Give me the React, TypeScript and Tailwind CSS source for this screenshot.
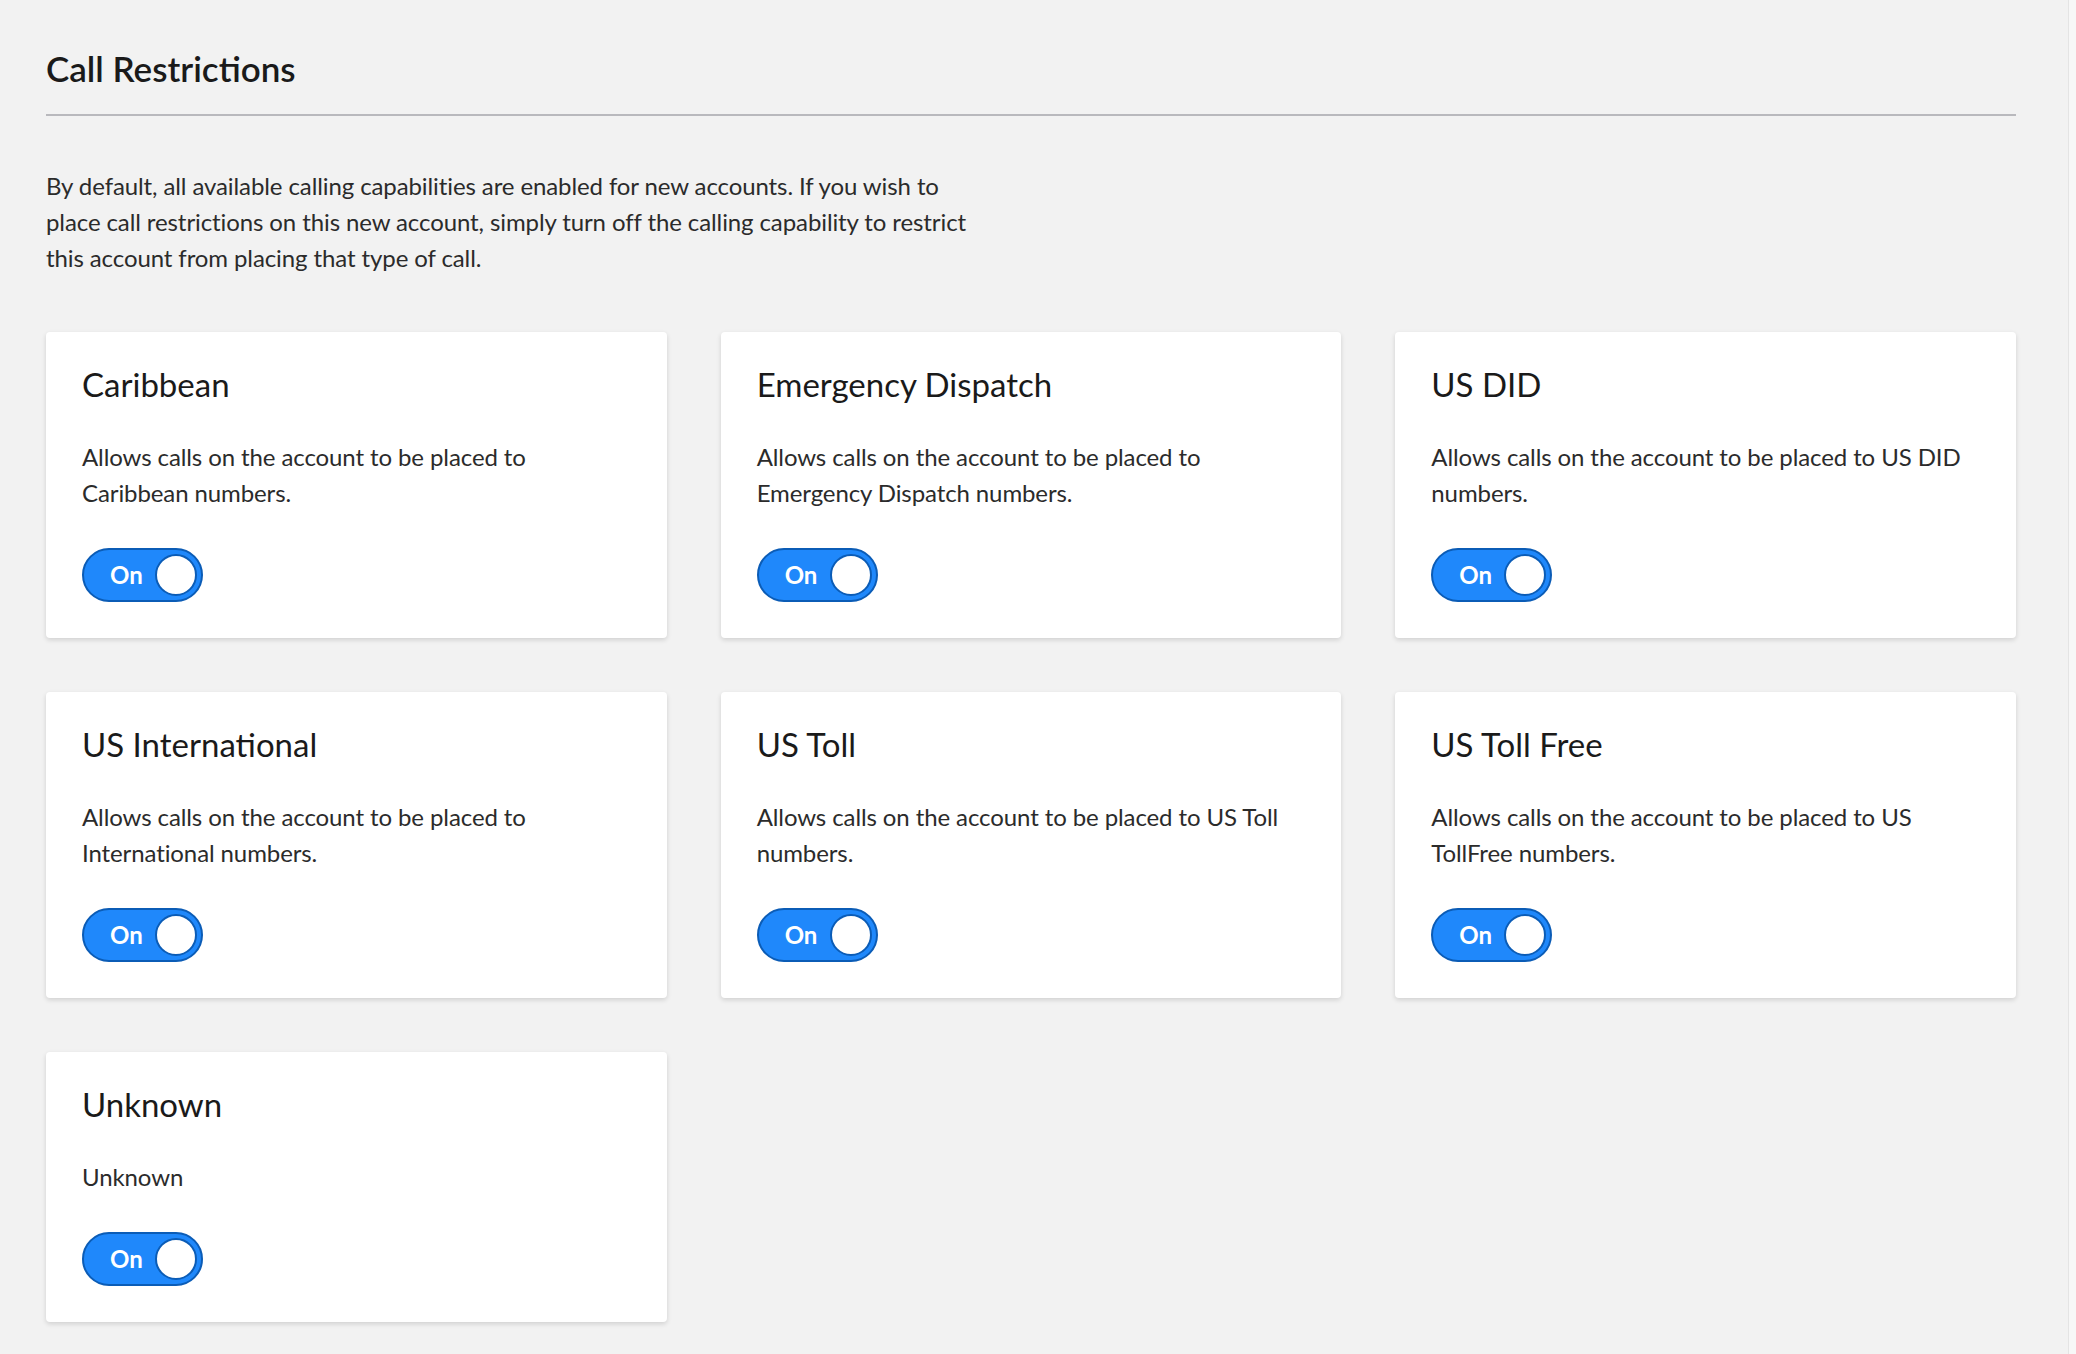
import React from "react";

const cards = [
  { title: "Caribbean", desc: "Allows calls on the account to be placed to Caribbean numbers." },
  { title: "Emergency Dispatch", desc: "Allows calls on the account to be placed to Emergency Dispatch numbers." },
  { title: "US DID", desc: "Allows calls on the account to be placed to US DID numbers." },
  { title: "US International", desc: "Allows calls on the account to be placed to International numbers." },
  { title: "US Toll", desc: "Allows calls on the account to be placed to US Toll numbers." },
  { title: "US Toll Free", desc: "Allows calls on the account to be placed to US TollFree numbers." },
  { title: "Unknown", desc: "Unknown" },
];

function Toggle() {
  return (
    <div className="flex h-[54px] w-[121px] items-center justify-between rounded-full border-2 border-[#0b5cb6] bg-[#1f88fb] pl-[26px] pr-[4px]">
      <span className="text-[24px] font-bold leading-none text-white">On</span>
      <span className="h-[42px] w-[42px] rounded-full border-2 border-[#0b5cb6] bg-white" />
    </div>
  );
}

export default function App() {
  return (
    <div
      className="flex min-h-[1354px] w-full bg-[#f2f2f2]"
      style={{ fontFamily: "Lato, 'Noto Sans', sans-serif" }}
    >
      <div className="flex-1 pl-[46px] pr-[52px] pt-[44px] pb-[30px]">
        <h1 className="text-[35px] font-semibold leading-[48px] text-[#1a1a1a]">
          Call Restrictions
        </h1>
        <div className="mt-[22px] h-[2px] bg-[#b9b9bd]" />
        <p className="mt-[52px] w-[990px] text-[24px] leading-[36px] tracking-[-0.1px] text-[#2b2b2b]">
          By default, all available calling capabilities are enabled for new accounts. If you wish to
          <br />
          place call restrictions on this new account, simply turn off the calling capability to restrict
          <br />
          this account from placing that type of call.
        </p>
        <div className="mt-[56px] grid grid-cols-3 gap-[54px]">
          {cards.map((c) => (
            <div
              key={c.title}
              className="rounded-[4px] bg-white p-[36px] shadow-[0_2px_5px_rgba(0,0,0,0.14)]"
            >
              <h2 className="text-[33px] leading-[32px] text-[#1a1a1a]">{c.title}</h2>
              <p className="mt-[39px] text-[24px] leading-[36px] tracking-[-0.1px] text-[#2b2b2b]">
                {c.desc}
              </p>
              <div className="mt-[37px]">
                <Toggle />
              </div>
            </div>
          ))}
        </div>
      </div>
      <div className="w-[8px] border-l border-[#e4e4e4] bg-[#f7f7f7]" />
    </div>
  );
}
